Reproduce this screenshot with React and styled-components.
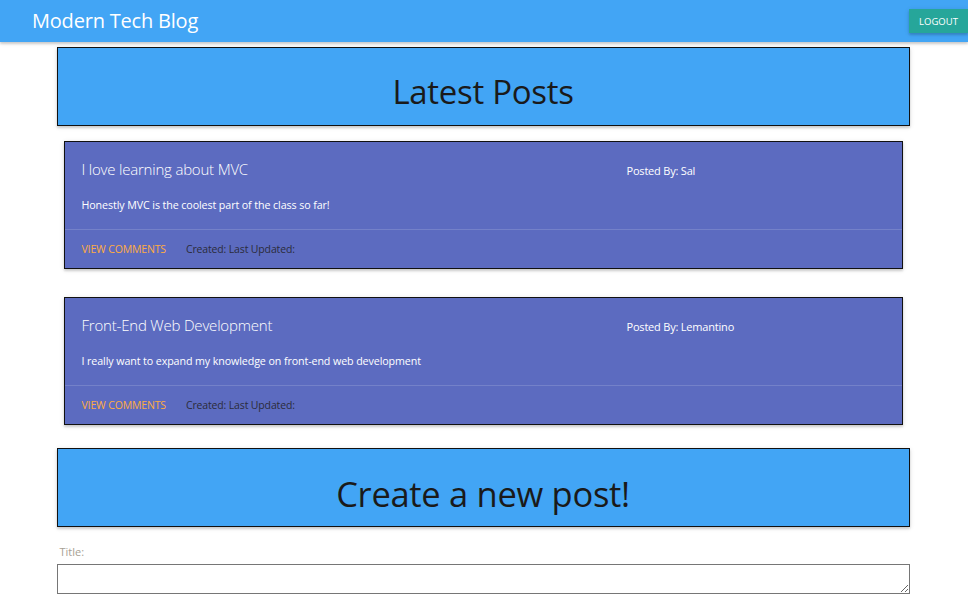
import React from 'react';
import styled, { createGlobalStyle } from 'styled-components';

const GlobalStyle = createGlobalStyle`
  body {
    margin: 0;
    background: #fff;
    font-family: 'Open Sans', 'Noto Sans', sans-serif;
    color: rgba(0, 0, 0, 0.87);
  }
`;

const Nav = styled.nav`
  height: 42px;
  background: #42a5f5;
  display: flex;
  align-items: center;
  justify-content: space-between;
  box-shadow: 0 2px 2px 0 rgba(0,0,0,0.14), 0 1px 5px 0 rgba(0,0,0,0.12);
`;

const Brand = styled.a`
  color: #fff;
  font-size: 20px;
  padding-left: 32px;
  letter-spacing: -0.2px;
  margin-top: -1px;
`;

const LogoutButton = styled.button`
  align-self: flex-start;
  margin-top: 9px;
  height: 24px;
  width: 59px;
  border: none;
  background: #26a69a;
  color: #fff;
  font-family: inherit;
  font-size: 9.5px;
  text-transform: uppercase;
  padding: 0;
  box-shadow: 0 2px 2px 0 rgba(0,0,0,0.14), 0 1px 5px 0 rgba(0,0,0,0.12);
`;

const Container = styled.main`
  width: 853px;
  margin: 0 auto;
  padding-top: 5px;
  position: relative;
  left: -1px;
`;

const Banner = styled.div`
  height: 77px;
  background: #42a5f5;
  border: 1px solid #111;
  display: flex;
  align-items: center;
  justify-content: center;
  box-shadow: 0 2px 2px 0 rgba(0,0,0,0.14), 0 1px 5px 0 rgba(0,0,0,0.12);
  margin-bottom: ${p => p.$gap || 0}px;
`;

const BannerTitle = styled.h1`
  margin: 0;
  font-weight: 400;
  font-size: ${p => p.$size || 33}px;
  color: #1a1a1a;
  letter-spacing: -0.3px;
  padding-top: ${p => p.$drop || 10}px;
`;

const CardList = styled.div`
  padding: 0 7px;
  display: flex;
  flex-direction: column;
  gap: 28px;
  margin-bottom: 23px;
`;

const Card = styled.div`
  background: #5c6bc0;
  border: 1px solid #111;
  box-shadow: 0 2px 2px 0 rgba(0,0,0,0.14), 0 1px 5px 0 rgba(0,0,0,0.12);
`;

const CardContent = styled.div`
  padding: 17px 16px 0 17px;
  height: 70px;
  border-bottom: 1px solid rgba(255,255,255,0.15);
`;

const CardHead = styled.div`
  display: flex;
  align-items: center;
`;

const CardTitle = styled.span`
  flex: 0 0 545px;
  color: #fff;
  font-size: 15px;
  font-weight: 300;
  letter-spacing: -0.2px;
`;

const Author = styled.span`
  color: #fff;
  font-size: 11px;
  letter-spacing: -0.2px;
  padding-top: 2px;
`;

const Body = styled.p`
  margin: 19px 0 0;
  color: #fff;
  font-size: 10.7px;
  letter-spacing: -0.1px;
`;

const CardAction = styled.div`
  height: 38px;
  padding: 0 16px 0 17px;
  display: flex;
  align-items: center;
  gap: 20px;
  font-size: 10.5px;
  letter-spacing: -0.15px;
`;

const CommentsLink = styled.a`
  color: #ffab40;
  text-transform: uppercase;
`;

const Meta = styled.span`
  color: #2b2b3a;
`;

const Form = styled.form`
  padding-top: 17px;
`;

const Label = styled.label`
  display: block;
  color: #a89f94;
  font-size: 11px;
  padding-left: 3px;
  margin-bottom: 5px;
`;

const TextArea = styled.textarea`
  display: block;
  box-sizing: border-box;
  width: 100%;
  height: 30px;
  border: 1px solid #767676;
  margin: 0;
`;

const posts = [
  { title: 'I love learning about MVC', author: 'Sal', body: 'Honestly MVC is the coolest part of the class so far!' },
  { title: 'Front-End Web Development', author: 'Lemantino', body: 'I really want to expand my knowledge on front-end web development' },
];

export default function App() {
  return (
    <>
      <GlobalStyle />
      <Nav>
        <Brand>Modern Tech Blog</Brand>
        <LogoutButton>Logout</LogoutButton>
      </Nav>
      <Container>
        <Banner $gap={15}>
          <BannerTitle $drop={9}>Latest Posts</BannerTitle>
        </Banner>
        <CardList>
          {posts.map(post => (
            <Card key={post.title}>
              <CardContent>
                <CardHead>
                  <CardTitle>{post.title}</CardTitle>
                  <Author>Posted By: {post.author}</Author>
                </CardHead>
                <Body>{post.body}</Body>
              </CardContent>
              <CardAction>
                <CommentsLink>View Comments</CommentsLink>
                <Meta>Created: Last Updated:</Meta>
              </CardAction>
            </Card>
          ))}
        </CardList>
        <Banner>
          <BannerTitle $size={34.5} $drop={12}>Create a new post!</BannerTitle>
        </Banner>
        <Form>
          <Label>Title:</Label>
          <TextArea />
        </Form>
      </Container>
    </>
  );
}
